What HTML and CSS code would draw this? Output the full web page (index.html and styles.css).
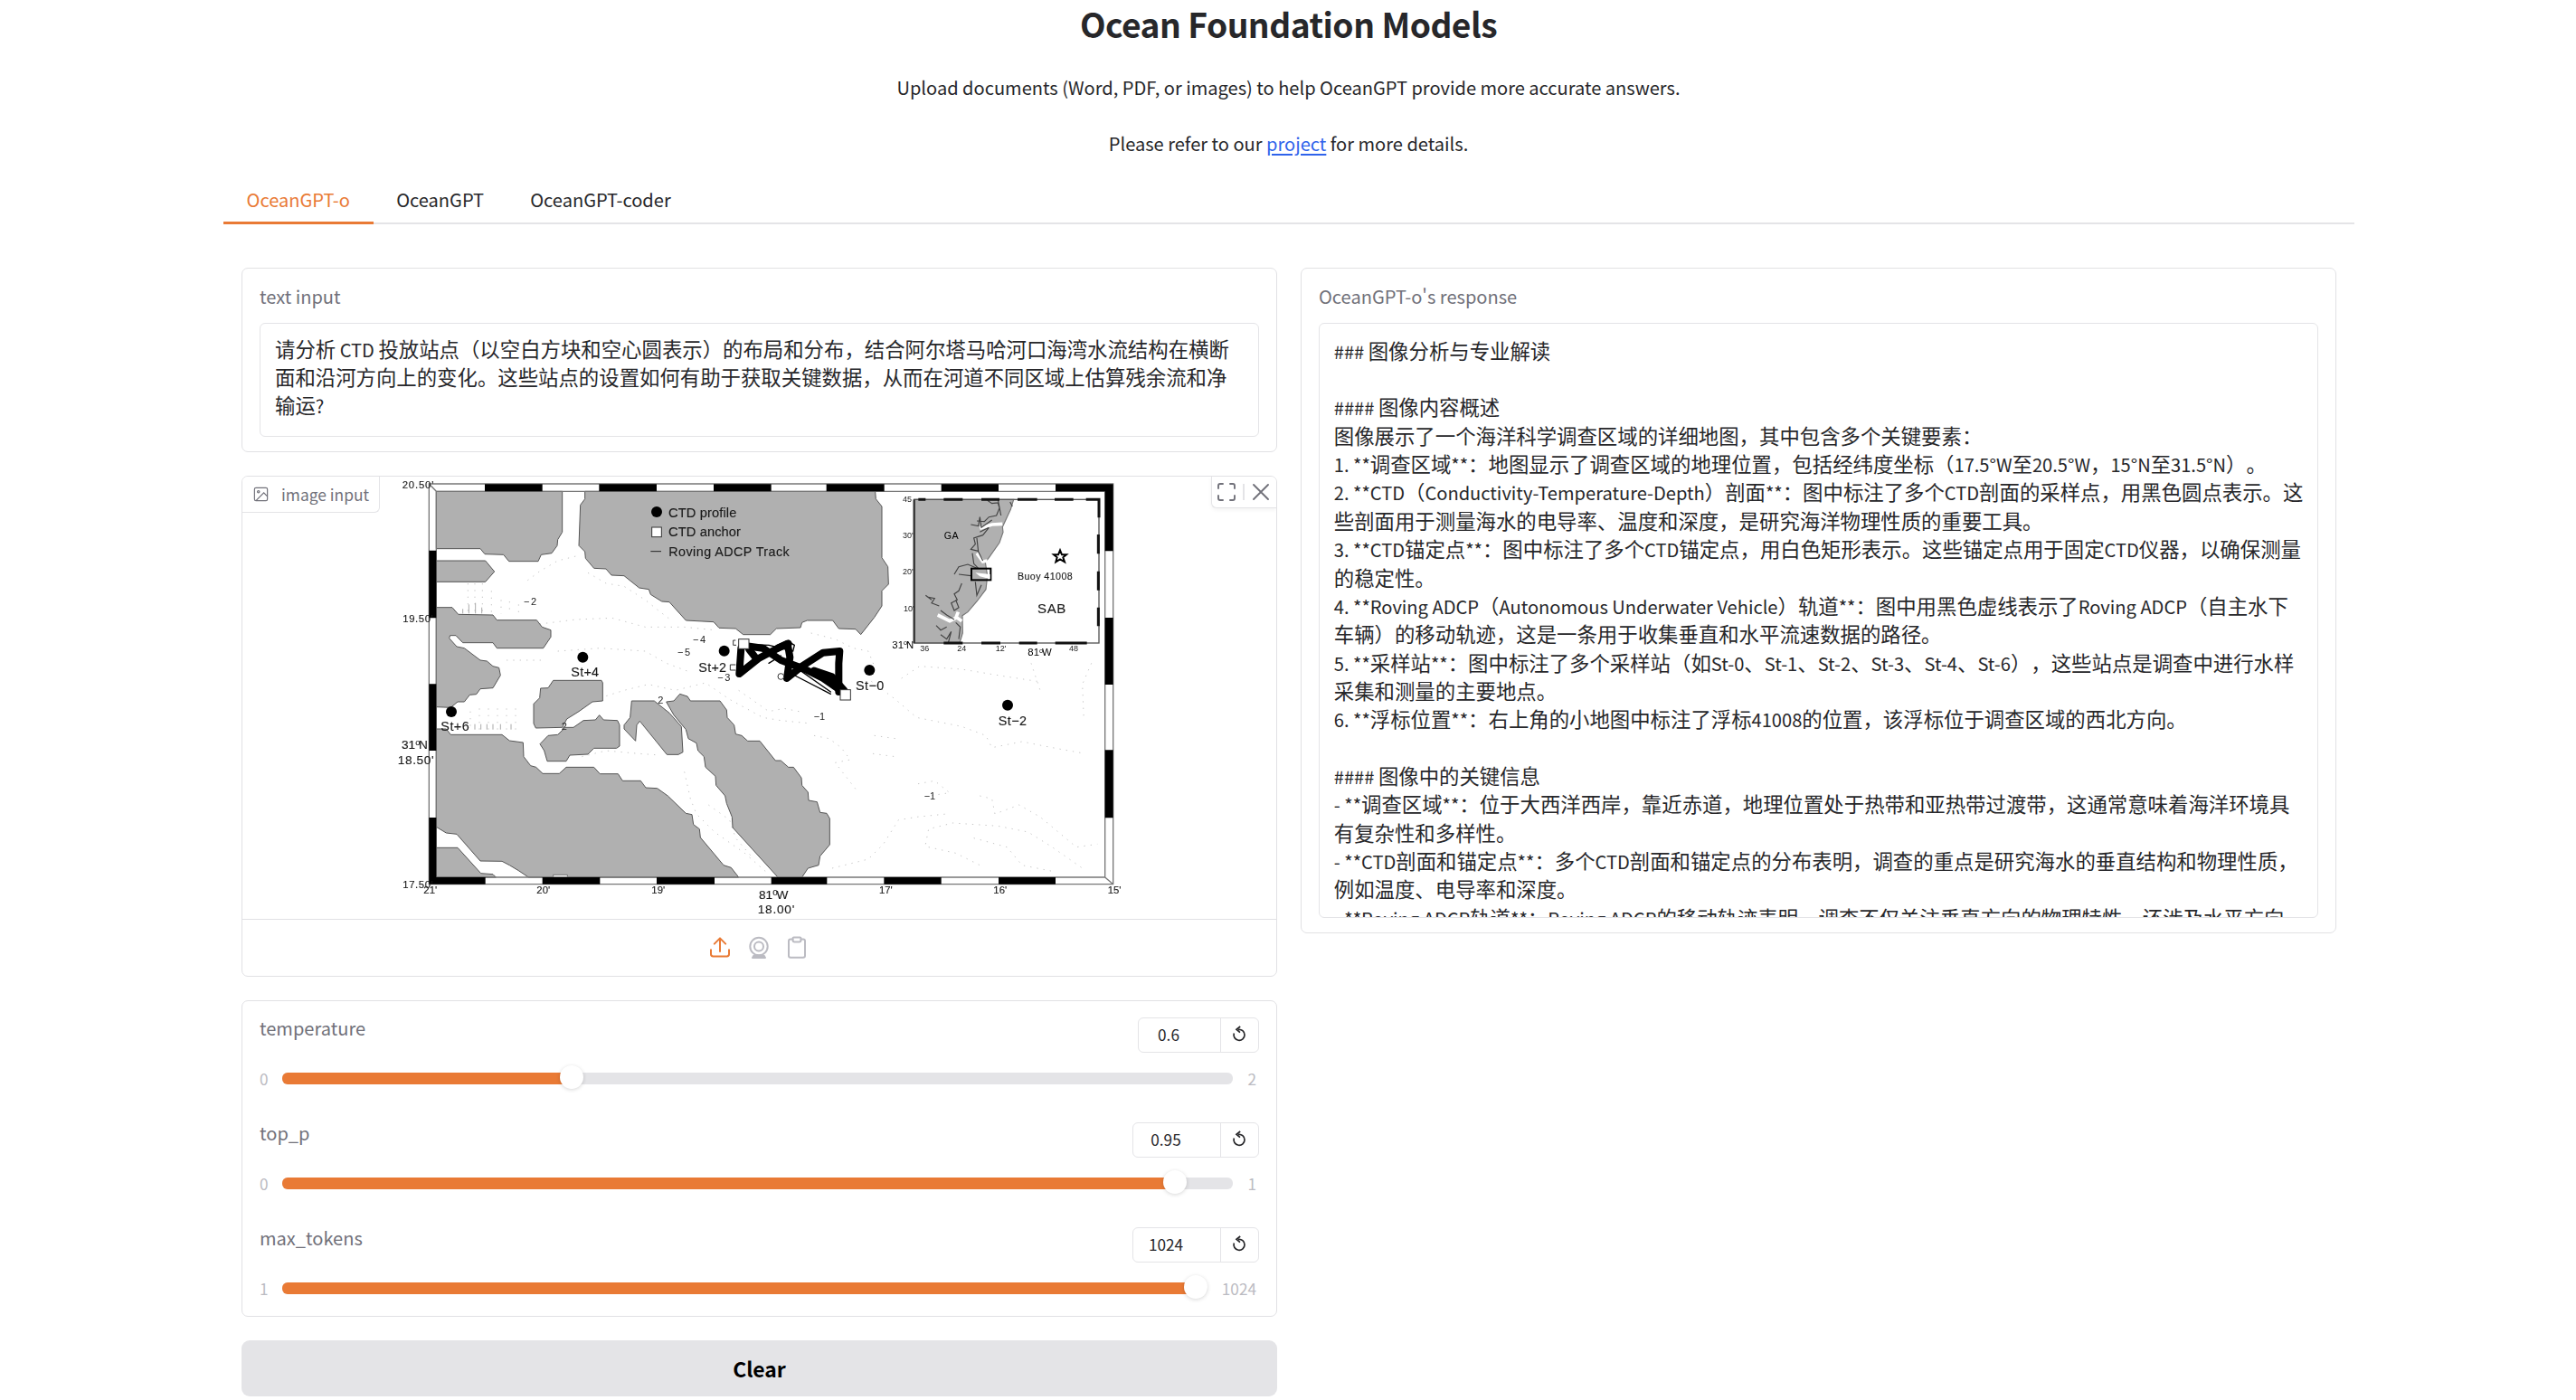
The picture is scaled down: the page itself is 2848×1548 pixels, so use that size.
FILE: index.html
```html
<!DOCTYPE html>
<html lang="zh-CN">
<head>
<meta charset="utf-8">
<title>Ocean Foundation Models</title>
<link rel="stylesheet" href="styles.css">
</head>
<body>
<header class="intro">
  <h1>Ocean Foundation Models</h1>
  <p>Upload documents (Word, PDF, or images) to help OceanGPT provide more accurate answers.</p>
  <p>Please refer to our <a href="#">project</a> for more details.</p>
</header>

<nav class="tabs">
  <button class="tab selected">OceanGPT-o</button>
  <button class="tab">OceanGPT</button>
  <button class="tab">OceanGPT-coder</button>
</nav>

<main class="columns">
  <section class="column">
    <div class="card field">
      <div class="label">text input</div>
      <div class="textbox prompt">请分析<span class="en"> CTD </span>投放站点（以空白方块和空心圆表示）的布局和分布，结合阿尔塔马哈河口海湾水流结构在横断
面和沿河方向上的变化。这些站点的设置如何有助于获取关键数据，从而在河道不同区域上估算残余流和净
输运<span class="en">?</span></div>
    </div>

    <div class="card image-card">
      <div class="preview">
        <svg class="map" viewBox="-486 21 3429 1470">
          <g class="contour">
            <path d="M460 365 500 335 560 300 620 285"/>
            <path d="M262 375V475M285 375V475M310 375V475M340 400V475M372 430V475M400 435V475M430 445V475" stroke-dasharray="4 12"/>
            <path class="tick" d="M245 460V475M265 445V475M287 440V475M308 455V475"/>
            <path d="M660 340 720 375 780 385 850 430 900 470 940 500"/>
            <path d="M500 510 620 495 740 490 850 520 980 520 1080 530"/>
            <path d="M390 630H520M560 600 700 590 850 600 920 640 1000 670"/>
            <path d="M300 790V860M330 790V860M360 790V860M390 790V860M420 790V860M270 800V860"/>
            <path class="tick" d="M285 842V860M305 842V860M325 842V860M345 842V860M370 842V860M405 842V860"/>
            <path d="M700 755 780 730 860 710 950 730 1050 705 1130 760 1240 820 1300 830 1400 840"/>
            <path d="M640 950 720 930 830 940 900 945M980 1000 1000 1090 1020 1140 1080 1200 1180 1270 1260 1340"/>
            <path d="M1060 1110 1130 1160 1150 1220 1210 1290"/>
            <path d="M1160 730 1260 800 1310 790 1360 800"/>
            <path d="M1410 880 1460 890 1500 920 1530 960 1480 970 1550 1060"/>
            <path d="M1400 540 1480 560 1540 590 1590 600 1610 650"/>
            <path d="M1600 700 1680 760 1750 820 1900 850 1980 880 2000 920 2100 900 2200 920 2310 940"/>
            <path d="M1700 690 1760 650 1900 660 2020 680 2150 700M2130 640 2160 730M2330 640 2300 710 2305 830"/>
            <path d="M1610 880 1680 890M1605 940 1680 950"/>
            <path d="M1470 1320 1590 1290 1640 1240 1690 1160 1750 1150 1850 1140"/>
            <path d="M1755 1040 1810 1030 1860 1070 1790 1080M1960 1080 2000 1090 2010 1140 2090 1110 2160 1150 2220 1200 2280 1250 2350 1240"/>
            <path d="M1780 1240 1790 1190 1870 1170 2020 1180 2120 1200 2200 1250 2300 1320"/>
            <path d="M1790 1250 1880 1270 1960 1310M1940 1220 2050 1250 2100 1310 2200 1330"/>
          </g>
          <g class="land">
            <path d="M157 70H575V205L560 230 558 250 540 275 505 280 495 302H398L380 280 318 278 303 260H157Z"/>
            <path d="M157 300H320L350 336 320 370H157Z"/>
            <path d="M157 455H210L230 478 345 480 358 497H490L508 520 537 530V553L512 590H358L345 572H245L222 548H203L200 557 225 585 250 590 303 630 325 633 345 650 365 655 370 680 345 722 303 725 290 743 268 745 250 768H228L205 787 157 785Z"/>
            <path d="M545 697H705L709 705V765L675 768 630 800 590 825 575 853 487 855 480 840V775L500 755 503 723 528 722Z"/>
            <path d="M585 853 612 853 645 830 685 828 698 812 712 828 758 830 765 845V915L755 922H680L660 942 600 945 588 965H525L515 930 501 908 528 880 560 877Z"/>
            <path d="M805 765H880L930 805 970 850 975 935 960 943H922L832 832 822 845 818 898 780 858V845L800 820Z"/>
            <path d="M920 768 945 765 965 742 990 750 1000 765H1098L1120 795 1122 820 1145 845 1150 875 1170 880 1190 898H1230L1282 963H1300L1325 985H1342L1368 1020 1370 1045 1390 1068 1392 1095 1420 1100 1430 1135 1452 1138 1462 1155V1242L1430 1280 1425 1310 1390 1320 1370 1350H1290L1140 1185 1138 1150 1120 1105 1115 1080 1085 1045 1083 1015 1050 985 1045 950 1025 930 1020 905 993 890 985 860 945 812Z"/>
            <path d="M157 858H190L205 877H375L400 897 445 903 447 950 470 980 488 985 510 1006H565L588 985H680L700 1007H760L775 1030H835L852 1053 890 1055 925 1080 985 1138 1005 1142 1010 1175 1030 1190 1033 1218 1110 1310 1135 1318 1160 1350H463L430 1328 400 1310 375 1297 303 1296 225 1207 190 1203 157 1183Z"/>
            <path d="M157 1252H228L305 1337 345 1340 355 1350H157Z"/>
            <path d="M650 70V95L635 115 630 250 650 270 652 292 680 325 720 327 738 348 780 350 830 390 862 395 868 412 905 435 930 437 985 498 1077 503 1095 523 1150 525 1175 545H1265L1285 525 1365 522 1370 505 1387 498H1472L1492 525 1548 527 1565 545 1610 488 1635 450V400L1657 378 1655 320 1635 290V120L1615 95 1613 70Z"/>
          </g>
          <path d="M545 1350V1342H592V1350" fill="#fff" stroke="#444" stroke-width="2"/>
          <g class="frame">
            <path d="M133 45H2402V1373H133ZM157 70H2375V1350H157ZM133 45 157 70M2375 1350 2402 1373"/>
          </g>
          <path d="M318 46H509V70H318ZM697 46H888V70H697ZM1077 46H1268V70H1077ZM1451 46H1643V70H1451ZM1832 46H2022V70H1832ZM2211 46H2402V70H2211ZM133 1350H320V1373H133ZM509 1350H700V1373H509ZM888 1350H1080V1373H888ZM1268 1350H1453V1373H1268ZM1642 1350H1832V1373H1642ZM2022 1350H2211V1373H2022ZM133 266H157V490H133ZM133 709H157V930H133ZM133 1152H157V1373H133ZM2375 46H2402V268H2375ZM2375 489H2402V711H2375ZM2375 928H2402V1153H2375Z"/>

          <circle cx="888" cy="138" r="18"/>
          <rect x="872" y="189" width="32" height="32" fill="#fff" stroke="#333" stroke-width="3"/>
          <path d="M868 269H903" stroke="#222" stroke-width="3"/>
          <g class="bold" font-size="44">
            <text x="927" y="156" textLength="226">CTD profile</text>
            <text x="927" y="219" textLength="240">CTD anchor</text>
            <text x="928" y="284" font-size="43" textLength="400">Roving ADCP Track</text>
          </g>

          <g class="track">
            <path d="M1168 590 1162 675 1225 625 1290 590 1325 575"/>
            <path d="M1180 582 1240 590 1300 630 1380 660 1440 690 1505 735" stroke-width="17"/>
            <path d="M1290 590 1322 575 1330 620 1320 690 1370 650 1440 605 1495 600 1492 640 1492 735"/>
            <path d="M1195 595 1215 620"/>
            <path d="M1410 665 1470 685 1510 730"/>
            <path class="thin" d="M1200 578 1260 580 1340 600 1345 580 1325 568M1240 600 1330 640 1465 735M1260 640 1300 615M1335 675 1465 742"/>
          </g>
          <g fill="#fff" stroke="#333" stroke-width="3">
            <path d="M1150 564H1142V580H1152M1150 645H1132V663H1150"/>
            <rect x="1160" y="560" width="34" height="32"/>
            <rect x="1497" y="728" width="34" height="34"/>
            <circle cx="1300" cy="684" r="10"/>
          </g>

          <circle cx="643" cy="620" r="18"/><circle cx="1112" cy="599" r="18"/>
          <circle cx="207" cy="801" r="18"/><circle cx="1594" cy="663" r="18"/><circle cx="2052" cy="779" r="18"/>
          <g class="bold" font-size="43">
            <text x="604" y="685" textLength="92">St+4</text>
            <text x="1027" y="668" textLength="92">St+2</text>
            <text x="172" y="865" textLength="94">St+6</text>
            <text x="1548" y="729" textLength="94">St−0</text>
            <text x="2021" y="846" textLength="94">St−2</text>
          </g>
          <g font-size="33" fill="#222">
            <text x="447" y="448" textLength="42">−2</text><text x="1008" y="573" textLength="42">−4</text>
            <text x="957" y="615" textLength="42">−5</text><text x="1090" y="698" textLength="42">−3</text>
            <text x="892" y="775">2</text><text x="572" y="860">2</text>
            <text x="1409" y="827">−1</text><text x="1775" y="1092">−1</text>
          </g>
          <g class="bold" font-size="34">
            <text x="44" y="61" textLength="104">20.50'</text>
            <text x="46" y="504" textLength="100">19.50'</text>
            <text x="46" y="1387" textLength="100">17.50'</text>
            <text x="115" y="1404">21'</text><text x="490" y="1404">20'</text>
            <text x="871" y="1404">19'</text><text x="1626" y="1404">17'</text>
            <text x="2005" y="1404">16'</text><text x="2384" y="1404">15'</text>
          </g>
          <g class="bold" font-size="41">
            <text x="42" y="925">31<tspan font-size="28" dy="-12">o</tspan><tspan dy="12" dx="-4">N</tspan></text>
            <text x="29" y="974" textLength="120">18.50'</text>
            <text x="1227" y="1423">81<tspan font-size="30" dy="-14">o</tspan><tspan dy="14" dx="-4">W</tspan></text>
            <text x="1223" y="1469" textLength="122">18.00'</text>
          </g>

          <rect x="1742" y="97" width="613" height="476" fill="#fff"/>
          <g class="coast">
            <path d="M1742 97H2072L2062 130 2035 188 2037 205 2025 240 1990 290 1978 305 1985 350 1980 395 1950 435 1920 470 1902 482 1903 540 1893 573H1742Z"/>
            <path class="inlet" d="M1960 193 2000 180 2035 178M1950 275 1970 303 1985 300M1820 480 1860 500 1880 490 1888 470M1885 490 1900 500"/>
            <path d="M1985 100 2000 110 2020 108 2025 125 2015 150 1990 155 1975 170 1950 168M1930 180 1955 185 1960 155 1965 190 2000 165M2020 97 2030 150M2060 105 2068 120M1960 205 1990 190 1970 215 1940 225 1945 245 1930 262 1955 268M1950 225 1955 270 1970 300"/>
            <path d="M1875 345 1890 320 1920 312 1950 325M1890 345 1930 350M1935 275 1940 310 1955 325M1900 375 1890 400 1875 410 1885 430 1865 440 1875 465 1890 455 1880 430M1945 370 1950 415 1965 380M1785 420 1810 425 1800 440 1825 450M1830 465 1850 480 1875 495M1815 515 1830 530 1850 520M1830 545 1850 560 1865 535 1855 573M1880 505 1895 520 1890 560M1780 415 1800 430"/>
          </g>
          <rect x="1742" y="97" width="613" height="476" fill="none" stroke="#555" stroke-width="4"/>
          <path d="M1756 97H1780M1840 97H1903M1965 97H2025M2085 97H2150M2208 97H2270M2312 97H2355V157M2353 213V277M2353 335V398M2353 455V517M1840 573H1903M1965 573H2028M2090 573H2150M2210 573H2315" fill="none" stroke="#111" stroke-width="9"/>
          <path d="M1742 97V573" stroke="#333" stroke-width="7"/>
          <rect x="1932" y="326" width="64" height="38" fill="none" stroke="#000" stroke-width="6"/>
          <path d="M1945 340 1994 345V361L1960 352Z" fill="#fff"/>
          <path d="M2226 265 2232 280H2247L2236 289 2241 304 2226 295 2212 304 2216 289 2205 280H2220Z" fill="#fff" stroke="#000" stroke-width="6"/>
          <text x="1841" y="227" font-size="32" textLength="48">GA</text>
          <g class="bold">
            <text x="2085" y="362" font-size="32" textLength="182">Buoy 41008</text>
            <text x="2151" y="473" font-size="45" textLength="94">SAB</text>
          </g>
          <g font-size="27" fill="#222">
            <text x="1704" y="106">45</text><text x="1704" y="226">30'</text>
            <text x="1704" y="345">20'</text><text x="1707" y="469">10'</text>
            <text x="1762" y="600">36</text><text x="1885" y="600">24</text>
            <text x="2012" y="600">12'</text><text x="2256" y="600">48</text>
          </g>
          <g font-size="34">
            <text x="1669" y="590">31<tspan font-size="22" dy="-10">o</tspan><tspan dy="10" dx="-3">N</tspan></text>
            <text x="2119" y="615">81<tspan font-size="22" dy="-10">o</tspan><tspan dy="10" dx="-3">W</tspan></text>
          </g>
        </svg>
        <div class="image-label">
          <svg viewBox="0 0 24 24" width="19" height="19"><rect x="3" y="3" width="18" height="18" rx="2"/><circle cx="8.5" cy="8.5" r="1.5"/><path d="m21 15-5-5L5 21"/></svg>
          <span>image input</span>
        </div>
        <div class="image-tools">
          <svg viewBox="0 0 24 24" width="24" height="24"><path d="M8 3H5a2 2 0 0 0-2 2v3M21 8V5a2 2 0 0 0-2-2h-3M16 21h3a2 2 0 0 0 2-2v-3M3 16v3a2 2 0 0 0 2 2h3"/></svg>
          <i class="divider"></i>
          <svg viewBox="0 0 24 24" width="24" height="24"><path d="m4 4 16 16M20 4 4 20"/></svg>
        </div>
      </div>
      <div class="sources">
        <svg class="active" viewBox="0 0 24 26" width="24" height="26"><path d="M2 15.3V20q0 2.4 2.4 2.4H19.6Q22 22.4 22 20V15.3M12 17V3M5.8 8.6 12 2.4 18.2 8.6"/></svg>
        <svg viewBox="0 0 24 26" width="24" height="26"><circle cx="12" cy="11.5" r="9.7"/><circle cx="12" cy="11.5" r="5"/><path d="M6.5 21.5H17.5L19 24H5Z" fill="currentColor"/></svg>
        <svg viewBox="0 0 24 26" width="24" height="26"><path d="M7.5 3.5H5Q3 3.5 3 5.5V21.8Q3 23.8 5 23.8H19Q21 23.8 21 21.8V5.5Q21 3.5 19 3.5H16.5"/><path d="M7.5 2.5Q7.5 1.5 8.5 1.5H15.5Q16.5 1.5 16.5 2.5V4.5Q16.5 6.5 14.5 6.5H9.5Q7.5 6.5 7.5 4.5Z"/></svg>
      </div>
    </div>

    <div class="card sliders">
      <div class="slider">
        <div class="head"><span class="label">temperature</span>
          <div class="number short"><span>0.6</span><button><svg viewBox="0 0 16 18" width="16" height="18"><path d="M2.3 8.5A6 6 0 1 0 7 4.4"/><path d="M9.2 1 5 4.2 9 7.6"/></svg></button></div></div>
        <div class="range"><span>0</span><div class="rail"><div class="fill" style="width:30.5%"></div></div><span class="max">2</span></div>
      </div>
      <div class="slider">
        <div class="head"><span class="label">top_p</span>
          <div class="number"><span>0.95</span><button><svg viewBox="0 0 16 18" width="16" height="18"><path d="M2.3 8.5A6 6 0 1 0 7 4.4"/><path d="M9.2 1 5 4.2 9 7.6"/></svg></button></div></div>
        <div class="range"><span>0</span><div class="rail"><div class="fill" style="width:93.9%"></div></div><span class="max">1</span></div>
      </div>
      <div class="slider">
        <div class="head"><span class="label">max_tokens</span>
          <div class="number"><span>1024</span><button><svg viewBox="0 0 16 18" width="16" height="18"><path d="M2.3 8.5A6 6 0 1 0 7 4.4"/><path d="M9.2 1 5 4.2 9 7.6"/></svg></button></div></div>
        <div class="range"><span>1</span><div class="rail"><div class="fill" style="width:98.7%"></div></div><span class="max">1024</span></div>
      </div>
    </div>

    <button class="clear">Clear</button>
  </section>

  <section class="column">
    <div class="card field">
      <div class="label">OceanGPT-o's response</div>
      <div class="textbox response"><span class="en">### </span>图像分析与专业解读

<span class="en">#### </span>图像内容概述
图像展示了一个海洋科学调查区域的详细地图，其中包含多个关键要素：
<span class="en">1. **</span>调查区域<span class="en">**</span>：地图显示了调查区域的地理位置，包括经纬度坐标（<span class="en">17.5°W</span>至<span class="en">20.5°W</span>，<span class="en">15°N</span>至<span class="en">31.5°N</span>）。
<span class="en">2. **CTD</span>（<span class="en">Conductivity-Temperature-Depth</span>）剖面<span class="en">**</span>：图中标注了多个<span class="en">CTD</span>剖面的采样点，用黑色圆点表示。这
些剖面用于测量海水的电导率、温度和深度，是研究海洋物理性质的重要工具。
<span class="en">3. **CTD</span>锚定点<span class="en">**</span>：图中标注了多个<span class="en">CTD</span>锚定点，用白色矩形表示。这些锚定点用于固定<span class="en">CTD</span>仪器，以确保测量
的稳定性。
<span class="en">4. **Roving ADCP</span>（<span class="en">Autonomous Underwater Vehicle</span>）轨道<span class="en">**</span>：图中用黑色虚线表示了<span class="en">Roving ADCP</span>（自主水下
车辆）的移动轨迹，这是一条用于收集垂直和水平流速数据的路径。
<span class="en">5. **</span>采样站<span class="en">**</span>：图中标注了多个采样站（如<span class="en">St-0</span>、<span class="en">St-1</span>、<span class="en">St-2</span>、<span class="en">St-3</span>、<span class="en">St-4</span>、<span class="en">St-6</span>），这些站点是调查中进行水样
采集和测量的主要地点。
<span class="en">6. **</span>浮标位置<span class="en">**</span>：右上角的小地图中标注了浮标<span class="en">41008</span>的位置，该浮标位于调查区域的西北方向。

<span class="en">#### </span>图像中的关键信息
<span class="en">- **</span>调查区域<span class="en">**</span>：位于大西洋西岸，靠近赤道，地理位置处于热带和亚热带过渡带，这通常意味着海洋环境具
有复杂性和多样性。
<span class="en">- **CTD</span>剖面和锚定点<span class="en">**</span>：多个<span class="en">CTD</span>剖面和锚定点的分布表明，调查的重点是研究海水的垂直结构和物理性质，
例如温度、电导率和深度。
<span class="en">- **Roving ADCP</span>轨道<span class="en">**</span>：<span class="en">Roving ADCP</span>的移动轨迹表明，调查不仅关注垂直方向的物理特性，还涉及水平方向</div>
    </div>
  </section>
</main>
</body>
</html>
```
FILE: styles.css
```css
* { box-sizing: border-box; }

body {
  margin: 0;
  height: 1548px;
  overflow: hidden;
  background: #fff;
  color: #27272a;
  font: 20.06px/31.36px "Noto Sans CJK SC", sans-serif;
  text-spacing-trim: space-all;
}

button {
  margin: 0;
  padding: 0;
  border: 0;
  background: none;
  color: inherit;
  font: inherit;
}

svg { fill: none; stroke: currentColor; display: block; }

.intro { text-align: center; padding-left: 1px; }
.intro h1 { margin: 0; font-size: 37.2px; line-height: 52px; font-weight: 700; letter-spacing: -.5px; }
.intro p { margin: 28.6px 0 0; }
.intro p + p { margin-top: 30.6px; }
.intro a { color: #2f63eb; text-decoration-thickness: 2px; text-underline-offset: 3px; }

.tabs {
  display: flex;
  margin: 15px 245px 0 247px;
  height: 59px;
  border-bottom: 2px solid #e4e4e7;
}
.tab { height: 59px; padding: 16.5px 25.6px 9px; border-bottom: 3px solid transparent; }
.tab.selected { color: #e97a35; border-color: #e97a35; }

.columns {
  display: grid;
  grid-template-columns: 1145px 1145px;
  gap: 26px;
  margin: 48px 0 0 267px;
  align-items: start;
}
.column { display: flex; flex-direction: column; gap: 25.5px; }

.card { border: 1px solid #e1e1e4; border-radius: 7px; background: #fff; }
.label { color: #71717a; }

.field { padding: 14.6px 19px 15.8px; }
.textbox {
  margin-top: 13.8px;
  padding: 12px 16px 0;
  border: 1px solid #e4e4e7;
  border-radius: 6px;
  overflow: hidden;
  white-space: pre;
  font-size: 22.4px;
}
.prompt { height: 126.8px; }
.response { height: 658.6px; padding-top: 14px; padding-left: 15.8px; }
.en { font-size: 20.08px; line-height: 1; }

.image-card { height: 554.6px; overflow: hidden; }
.preview { position: relative; height: 490.6px; border-bottom: 1px solid #e1e1e4; }
.map { width: 1143px; height: 490px; stroke: none; fill: #000; font-family: "Liberation Sans", Arial, sans-serif; filter: blur(.6px); }
.land path { fill: #b0b0b0; stroke: #555; stroke-width: 3; }
.frame path { fill: none; stroke: #777; stroke-width: 4; }
.contour path { fill: none; stroke: #bbb; stroke-width: 2.5; stroke-dasharray: 4 18; }
.contour .tick { stroke: #999; stroke-dasharray: none; }
.bold { fill: #1a1a1a; stroke: #1a1a1a; stroke-width: .4; }
.track path { fill: none; stroke: #000; stroke-width: 24; stroke-linejoin: round; stroke-linecap: round; }
.track .thin { stroke-width: 4; }
.coast path { fill: none; stroke: #444; stroke-width: 3.5; }
.coast path:first-child { fill: #b0b0b0; stroke: #777; }
.coast .inlet { stroke: #fff; stroke-width: 11; }

.image-label {
  position: absolute;
  left: 0;
  top: 0;
  display: flex;
  align-items: center;
  gap: 13px;
  width: 152px;
  height: 40px;
  padding-left: 11px;
  border: solid #e4e4e7;
  border-width: 0 1px 1px 0;
  border-bottom-right-radius: 6px;
  background: #fff;
  color: #71717a;
  font-size: 17.4px;
}
.image-label svg { stroke-width: 1.5; }

.image-tools {
  position: absolute;
  right: 0;
  top: 0;
  display: flex;
  align-items: center;
  gap: 6px;
  width: 72px;
  height: 35px;
  padding-left: 4px;
  border: solid #e4e4e7;
  border-width: 0 0 1px 1px;
  border-bottom-left-radius: 6px;
  background: #fff;
  color: #71717a;
  box-shadow: 0 2px 4px rgba(0, 0, 0, .05);
}
.image-tools svg { stroke-width: 1.9; stroke-linecap: round; }
.divider { flex: none; width: 2px; height: 18px; background: #e4e4e7; }

.sources { display: flex; justify-content: center; align-items: center; gap: 18.5px; height: 62px; padding-right: 2px; color: #bbbbc2; }
.sources svg { stroke-width: 2; stroke-linecap: round; stroke-linejoin: round; }
.sources .active { color: #e97a35; }

.sliders { display: flex; flex-direction: column; gap: 35.4px; height: 350.6px; padding: 18.5px 19px 0; }
.slider { height: 80.6px; }
.head { display: flex; justify-content: space-between; align-items: flex-start; height: 54.5px; }
.head .label { margin-top: -4px; }
.number { display: flex; width: 140px; height: 38.5px; border: 1px solid #e4e4e7; border-radius: 6px; font-size: 17.2px; }
.number.short { width: 134px; }
.number span { flex: 1; padding-right: 24px; text-align: center; line-height: 36.5px; }
.number button { display: flex; align-items: center; justify-content: center; width: 42px; padding-right: 1px; border-left: 1px solid #e4e4e7; }
.number svg { stroke-width: 1.7; margin-top: -4px; }

.range { display: flex; align-items: center; height: 26px; color: #bbbbc2; font-size: 17.2px; }
.rail { flex: 1; height: 13px; margin: 0 16px 0 15px; border-radius: 6px; background: #e4e4e7; }
.fill { position: relative; height: 13px; border-radius: 6px 0 0 6px; background: #e97a35; }
.fill::after {
  content: "";
  position: absolute;
  right: -13px;
  top: -8px;
  width: 26px;
  height: 26px;
  border-radius: 50%;
  background: #fff;
  box-shadow: 0 1px 4px rgba(0, 0, 0, .16);
}
.max { margin-right: 3px; }

.clear { height: 62.5px; border-radius: 9px; background: #e4e4e7; color: #000; font-size: 22.9px; font-weight: 700; }
```
